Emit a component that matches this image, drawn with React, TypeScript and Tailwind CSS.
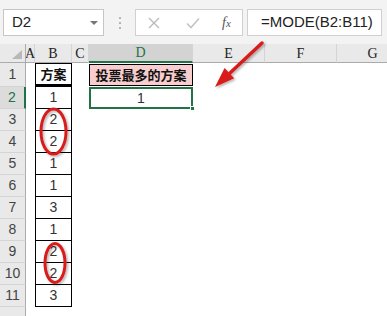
const COLS = [
  { name: "A", w: "w-[9px]" },
  { name: "B", w: "w-[37px]" },
  { name: "C", w: "w-[17px]" },
  { name: "D", w: "w-[104px]" },
  { name: "E", w: "w-[72px]" },
  { name: "F", w: "w-[72px]" },
  { name: "G", w: "w-[72px]" },
];

const VALUES = ["1", "2", "2", "1", "1", "3", "1", "2", "2", "3"];

function TopBar() {
  return (
    <div className="flex h-[44px] items-start bg-[#f3f3f3] pt-[9px]">
      <div className="ml-[3px] flex h-[27px] w-[101px] items-center justify-between border border-[#c6c6c6] bg-white pl-[8px] pr-[5px] text-[15px] text-[#222]">
        <span>D2</span>
        <svg width="8" height="4" viewBox="0 0 8 4">
          <path d="M0 0 L8 0 L4 4 Z" fill="#777" />
        </svg>
      </div>
      <div className="flex h-[27px] w-[31px] flex-col items-center justify-center gap-[3px]">
        <span className="h-[2px] w-[2px] bg-[#b5b5b5]" />
        <span className="h-[2px] w-[2px] bg-[#b5b5b5]" />
        <span className="h-[2px] w-[2px] bg-[#b5b5b5]" />
      </div>
      <div className="flex h-[27px] w-[108px] items-center border border-[#d0d0d0] bg-white">
        <svg className="ml-[12px]" width="12" height="12" viewBox="0 0 12 12">
          <path d="M1 1 L11 11 M11 1 L1 11" stroke="#b9b9b9" strokeWidth="1.3" />
        </svg>
        <svg className="ml-[26px]" width="14" height="12" viewBox="0 0 14 12">
          <path d="M1 6.5 L5 10.5 L13 1.5" stroke="#c4c4c4" strokeWidth="1.6" fill="none" />
        </svg>
        <span className="ml-[22px] font-['Liberation_Serif'] text-[14px] italic text-[#555]">
          f<span className="text-[11px]">x</span>
        </span>
      </div>
      <div className="ml-[4px] mr-[5px] flex h-[27px] flex-1 items-center border border-[#d0d0d0] bg-white pl-[13px] text-[15px] text-[#222]">
        =MODE(B2:B11)
      </div>
    </div>
  );
}

function HeaderRow() {
  return (
    <div className="flex h-[19px] bg-[#e9e9e9]">
      <div className="relative w-[26px] shrink-0 border-b border-r border-[#ababab]">
        <svg className="absolute bottom-[3px] right-[3px]" width="10" height="9" viewBox="0 0 10 9">
          <path d="M10 0 L10 9 L0 9 Z" fill="#b8b8b8" />
        </svg>
      </div>
      {COLS.map((c) =>
        c.name === "D" ? (
          <div
            key={c.name}
            className={`${c.w} flex shrink-0 items-center justify-center border-b-2 border-r border-b-[#217346] border-r-[#d4d4d4] bg-[#d3d3d3] font-['Liberation_Serif'] text-[14px] text-[#217346]`}
          >
            {c.name}
          </div>
        ) : (
          <div
            key={c.name}
            className={`${c.w} flex shrink-0 items-center justify-center border-b border-r border-b-[#ababab] border-r-[#d4d4d4] font-['Liberation_Serif'] text-[14px] text-[#222]`}
          >
            {c.name}
          </div>
        )
      )}
    </div>
  );
}

function RowHeader({ n, active }: { n?: number; active?: boolean }) {
  return (
    <div
      className={
        active
          ? "flex w-[26px] shrink-0 items-center justify-center border-b border-r-2 border-b-[#d4d4d4] border-r-[#217346] bg-[#dcdcdc] text-[14px] text-[#217346]"
          : "flex w-[26px] shrink-0 items-center justify-center border-b border-r border-b-[#d4d4d4] border-r-[#ababab] bg-[#e9e9e9] text-[14px] text-[#444]"
      }
    >
      {n}
    </div>
  );
}

export default function App() {
  return (
    <div className="relative h-[316px] w-[387px] overflow-hidden bg-white font-['Liberation_Sans',sans-serif]">
      <TopBar />
      <HeaderRow />

      {/* row 1 */}
      <div className="flex h-[24px]">
        <RowHeader n={1} />
        <div className="w-[9px] shrink-0" />
        <div className="flex w-[37px] shrink-0 items-center justify-center border-x border-t border-b-[3px] border-black border-b-double font-['Noto_Sans_CJK_SC',sans-serif] text-[13px] font-bold text-[#111]">
          方案
        </div>
        <div className="w-[17px] shrink-0" />
        <div className="flex w-[104px] shrink-0 items-center py-[1px]">
          <div className="flex h-full w-full items-center justify-center border border-black bg-[#f7cdcd] font-['Noto_Sans_CJK_SC',sans-serif] text-[13px] font-bold text-[#111]">
            投票最多的方案
          </div>
        </div>
      </div>

      {VALUES.map((v, i) => (
        <div key={i} className="flex h-[22px]">
          <RowHeader n={i + 2} active={i === 0} />
          <div className="w-[9px] shrink-0" />
          <div className="flex w-[37px] shrink-0 items-center justify-center border-x border-b border-black text-[14px] text-[#333]">
            {v}
          </div>
          <div className="w-[17px] shrink-0" />
          {i === 0 && (
            <div className="relative flex w-[104px] shrink-0 items-center justify-center border-2 border-[#217346] text-[14px] text-[#333]">
              1
              <span className="absolute -bottom-[4px] -right-[4px] h-[5px] w-[5px] border border-white bg-[#217346]" />
            </div>
          )}
        </div>
      ))}

      <div className="flex h-[22px]">
        <RowHeader />
      </div>

      <svg className="pointer-events-none absolute left-0 top-0" width="387" height="316" viewBox="0 0 387 316">
        <defs>
          <filter id="sh" x="-20%" y="-20%" width="140%" height="140%">
            <feDropShadow dx="1.5" dy="1.5" stdDeviation="1.2" floodColor="#000" floodOpacity="0.3" />
          </filter>
        </defs>
        <g filter="url(#sh)" stroke="#d81e1e" fill="none" strokeWidth="3">
          <ellipse cx="53.5" cy="131.5" rx="12.5" ry="22.5" />
          <ellipse cx="55" cy="263" rx="10" ry="19.5" />
          <line x1="262" y1="43" x2="230" y2="73" strokeLinecap="round" strokeWidth="3.5" />
          <polygon points="215,87 224.6,68 234.2,78.3" fill="#d81e1e" stroke="none" />
        </g>
      </svg>
    </div>
  );
}
